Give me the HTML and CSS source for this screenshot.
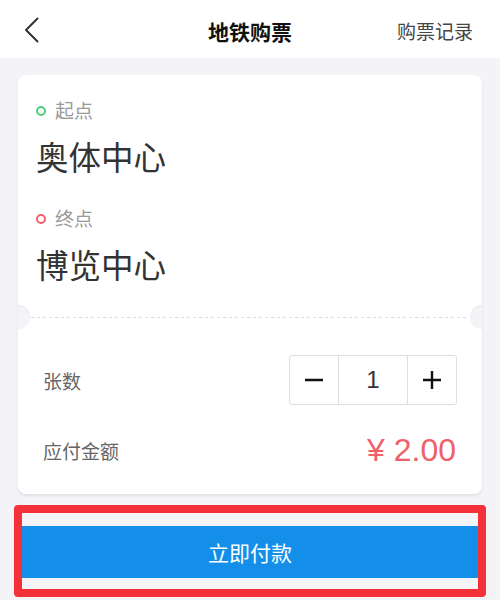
FILE: index.html
```html
<!DOCTYPE html>
<html lang="zh-CN">
<head>
<meta charset="utf-8">
<title>地铁购票</title>
<link rel="stylesheet" href="styles.css">
</head>
<body>
<div class="page">
  <header class="nav">
    <div class="nav-left">
      <svg class="back" width="16" height="26" viewBox="0 0 16 26"><polyline points="13.5,1.5 2,13 13.5,24.5" fill="none" stroke="#333" stroke-width="2" stroke-linecap="round" stroke-linejoin="round"/></svg>
    </div>
    <div class="nav-title">地铁购票</div>
    <div class="nav-right">购票记录</div>
  </header>

  <section class="card">
    <div class="route">
      <div class="label"><span class="dot dot-start"></span>起点</div>
      <div class="station">奥体中心</div>
      <div class="label label-end"><span class="dot dot-end"></span>终点</div>
      <div class="station">博览中心</div>
    </div>
    <div class="divider"></div>
    <div class="info">
      <div class="row">
        <span class="row-label">张数</span>
        <div class="stepper">
          <div class="step-btn">
            <svg width="20" height="20" viewBox="0 0 20 20"><line x1="1" y1="10" x2="19" y2="10" stroke="#111" stroke-width="2.6"/></svg>
          </div>
          <div class="step-value">1</div>
          <div class="step-btn">
            <svg width="20" height="20" viewBox="0 0 20 20"><line x1="1" y1="10" x2="19" y2="10" stroke="#111" stroke-width="2.4"/><line x1="10" y1="1" x2="10" y2="19" stroke="#111" stroke-width="2.4"/></svg>
          </div>
        </div>
      </div>
      <div class="row">
        <span class="row-label">应付金额</span>
        <span class="price">¥ 2.00</span>
      </div>
    </div>
  </section>

  <div class="footer">
    <button class="pay">立即付款</button>
  </div>
</div>
</body>
</html>
```

FILE: styles.css
```css
html, body {
  margin: 0;
  padding: 0;
}
body {
  background: #f4f4f8;
  font-family: "Noto Sans CJK SC", "Noto Sans", sans-serif;
  color: #333;
}
.page {
  width: 500px;
  height: 600px;
  overflow: hidden;
  display: flex;
  flex-direction: column;
}
.nav {
  height: 58px;
  flex: none;
  background: #fff;
  display: grid;
  grid-template-columns: 1fr auto 1fr;
  align-items: center;
}
.nav-left {
  padding-left: 24px;
  display: flex;
  align-items: center;
}
.back {
  display: block;
  margin-top: 2px;
}
.nav-title {
  font-size: 21px;
  font-weight: 700;
  color: #111;
  line-height: 30px;
  margin-top: 4px;
}
.nav-right {
  justify-self: end;
  padding-right: 27px;
  font-size: 19px;
  color: #444;
  line-height: 30px;
  margin-top: 4px;
}
.card {
  margin: 17px 18px 0;
  background: #fff;
  border-radius: 8px;
  box-shadow: 0 2px 3px rgba(0, 0, 0, 0.08);
  overflow: hidden;
}
.route {
  padding: 23px 18px 33px 18px;
}
.label {
  display: flex;
  align-items: center;
  gap: 9px;
  font-size: 19px;
  line-height: 24px;
  color: #999;
}
.label-end {
  margin-top: 30px;
}
.dot {
  width: 6px;
  height: 6px;
  border-radius: 50%;
  border: 2.5px solid;
  box-sizing: content-box;
  margin-top: 1px;
}
.dot-start {
  border-color: #4ccf7d;
}
.dot-end {
  border-color: #f0606a;
}
.station {
  margin-top: 14px;
  font-size: 32.5px;
  line-height: 40px;
  color: #333;
}
.divider {
  position: relative;
  height: 1px;
  margin: 0 13px;
  background: repeating-linear-gradient(90deg, #dcdce0 0 3px, transparent 3px 6px);
}
.divider::before,
.divider::after {
  content: "";
  position: absolute;
  top: -12px;
  width: 24px;
  height: 24px;
  border-radius: 50%;
  background: #f4f4f8;
  box-shadow: inset 0 1px 2px rgba(0, 0, 0, 0.06);
}
.divider::before {
  left: -25px;
}
.divider::after {
  right: -25px;
}
.info {
  padding: 37px 25px 19px 25px;
  display: flex;
  flex-direction: column;
  gap: 20px;
}
.row {
  height: 50px;
  display: flex;
  align-items: center;
  justify-content: space-between;
}
.row-label {
  font-size: 19px;
  color: #666;
}
.stepper {
  display: flex;
  height: 50px;
  border: 1px solid #dedede;
  border-radius: 3px;
  box-sizing: border-box;
}
.step-btn {
  width: 48px;
  display: flex;
  align-items: center;
  justify-content: center;
}
.step-value {
  width: 68px;
  border-left: 1px solid #dedede;
  border-right: 1px solid #dedede;
  display: flex;
  align-items: center;
  justify-content: center;
  font-family: "Liberation Sans", Arial, sans-serif;
  font-size: 24px;
  color: #333;
}
.price {
  font-family: "Liberation Sans", Arial, sans-serif;
  font-size: 32px;
  color: #f0606a;
  margin-right: 1px;
}
.footer {
  margin: 11px 14px 0;
  border: 8px solid #f43038;
  border-radius: 4px;
  padding: 13px 0 11px;
  background: #f4f4f8;
}
.pay {
  display: block;
  width: 100%;
  height: 52px;
  border: none;
  margin: 0;
  background: #148fe9;
  color: #fff;
  font-family: "Noto Sans CJK SC", "Noto Sans", sans-serif;
  font-size: 21px;
  padding: 0;
}
```
